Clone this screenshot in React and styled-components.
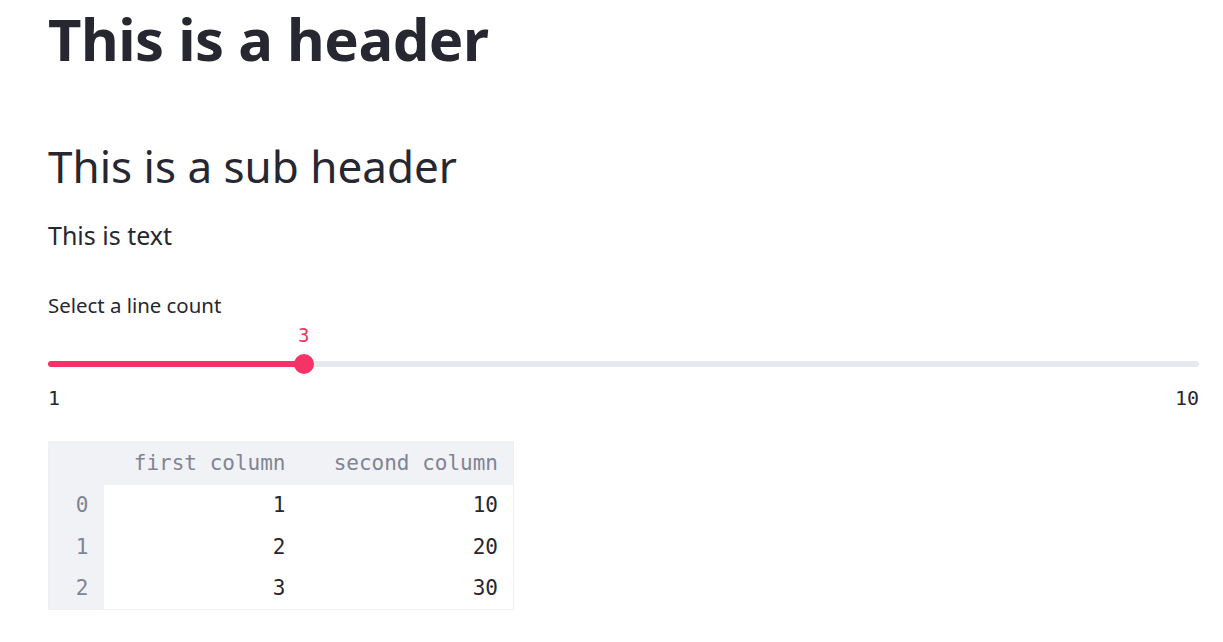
import styled, { createGlobalStyle } from "styled-components";

const Global = createGlobalStyle`
  body {
    margin: 0;
    background: #ffffff;
    font-family: "Noto Sans", "Open Sans", sans-serif;
    color: #262730;
  }
`;

const Page = styled.div`
  padding: 0 24px 0 48px;
  width: 1151px;
`;

const Title = styled.h1`
  margin: 0;
  padding-top: 5px;
  font-size: 58px;
  font-weight: 700;
  line-height: 68px;
  letter-spacing: -0.5px;
`;

const SubTitle = styled.h2`
  margin: 63px 0 0;
  font-size: 44px;
  font-weight: 400;
  line-height: 60px;
`;

const Text = styled.p`
  margin: 20px 0 0;
  font-size: 25px;
  line-height: 38px;
`;

const SliderBlock = styled.div`
  margin-top: 36px;
`;

const Label = styled.div`
  font-size: 20.4px;
  line-height: 30px;
`;

const Rail = styled.div`
  position: relative;
  margin-top: 41px;
  height: 6px;
  border-radius: 3px;
  background: #e6e9ef;
`;

const Fill = styled.div`
  height: 100%;
  border-radius: 3px;
  background: #f63366;
`;

const Thumb = styled.div`
  position: absolute;
  top: 50%;
  width: 20px;
  height: 20px;
  border-radius: 50%;
  background: #f63366;
  transform: translate(-50%, -50%);
`;

const ThumbValue = styled.div`
  position: absolute;
  bottom: 29px;
  left: 50%;
  transform: translateX(-50%);
  font-family: "DejaVu Sans Mono", "Liberation Mono", monospace;
  font-size: 19px;
  line-height: 20px;
  color: #f63366;
`;

const Ticks = styled.div`
  display: flex;
  justify-content: space-between;
  margin-top: 17px;
  font-family: "DejaVu Sans Mono", "Liberation Mono", monospace;
  font-size: 20px;
  line-height: 28px;
`;

const Table = styled.table`
  margin-top: 29px;
  border-collapse: collapse;
  border: 1px solid #eef0f4;
  font-family: "DejaVu Sans Mono", "Liberation Mono", monospace;
  font-size: 21px;
`;

const Head = styled.th`
  height: 43px;
  padding: 0 15px;
  text-align: right;
  font-weight: 400;
  color: #808495;
  background: #f0f2f6;
  width: ${(p) => p.$w}px;
  box-sizing: border-box;
`;

const Index = styled.th`
  height: 41.5px;
  padding: 0 15px;
  text-align: right;
  font-weight: 400;
  color: #808495;
  background: #f0f2f6;
`;

const Cell = styled.td`
  height: 41.5px;
  padding: 0 15px;
  text-align: right;
  color: #262730;
`;

const rows = [
  [0, 1, 10],
  [1, 2, 20],
  [2, 3, 30],
];

function Slider({ label, min, max, value }) {
  const pct = ((value - min) / (max - min)) * 100;
  return (
    <SliderBlock>
      <Label>{label}</Label>
      <Rail>
        <Fill style={{ width: `${pct}%` }} />
        <Thumb style={{ left: `${pct}%` }}>
          <ThumbValue>{value}</ThumbValue>
        </Thumb>
      </Rail>
      <Ticks>
        <span>{min}</span>
        <span>{max}</span>
      </Ticks>
    </SliderBlock>
  );
}

export default function App() {
  return (
    <Page>
      <Global />
      <Title>This is a header</Title>
      <SubTitle>This is a sub header</SubTitle>
      <Text>This is text</Text>
      <Slider label="Select a line count" min={1} max={10} value={3} />
      <Table>
        <thead>
          <tr>
            <Head $w={55}></Head>
            <Head $w={197}>first column</Head>
            <Head $w={213}>second column</Head>
          </tr>
        </thead>
        <tbody>
          {rows.map(([i, a, b]) => (
            <tr key={i}>
              <Index>{i}</Index>
              <Cell>{a}</Cell>
              <Cell>{b}</Cell>
            </tr>
          ))}
        </tbody>
      </Table>
    </Page>
  );
}
